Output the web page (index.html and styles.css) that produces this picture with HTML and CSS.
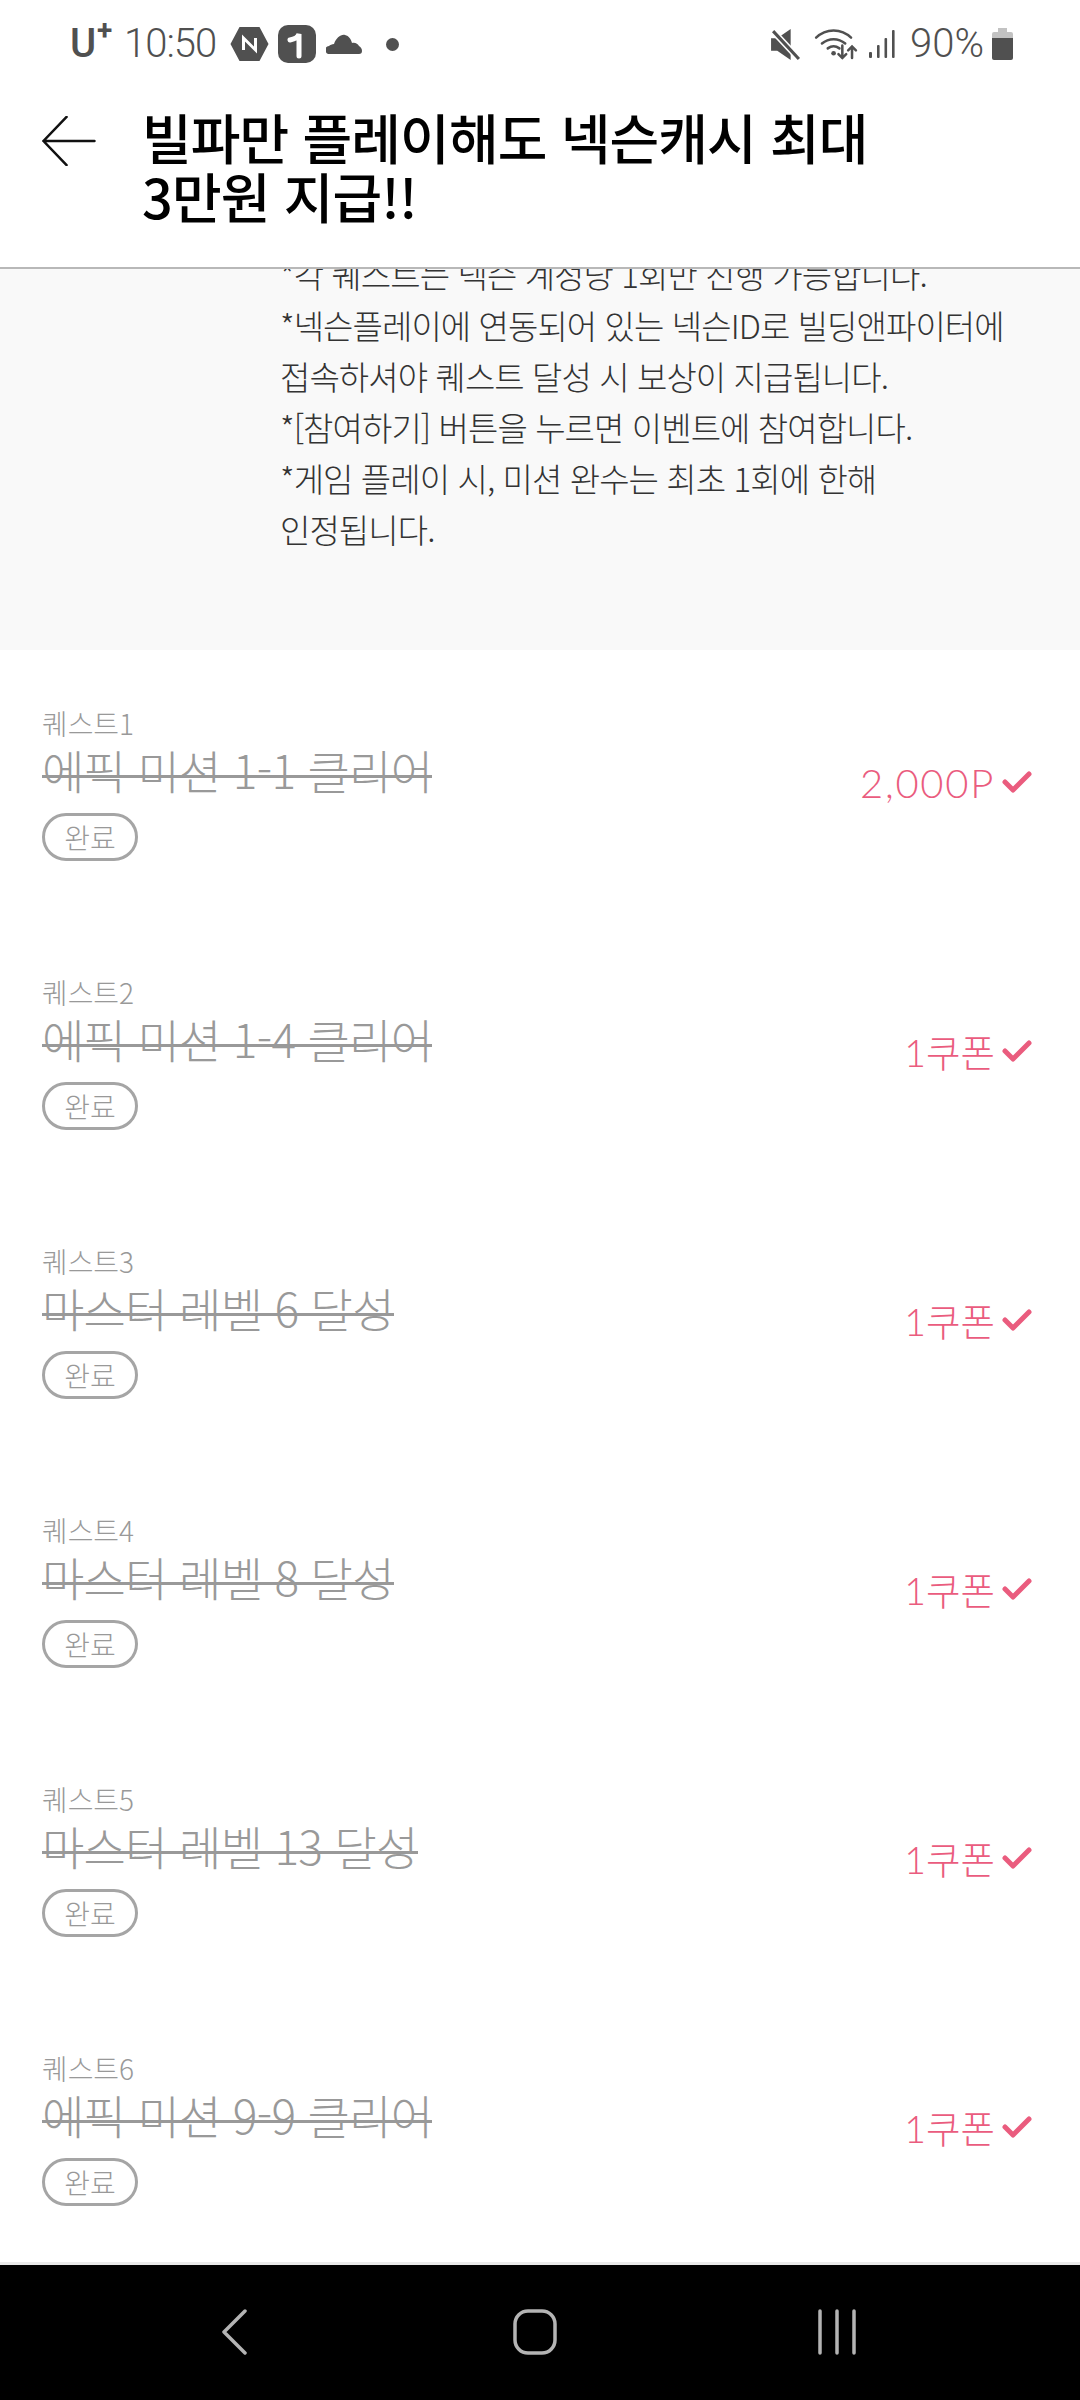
FILE: index.html
```html
<!DOCTYPE html>
<html lang="ko">
<head>
<meta charset="utf-8">
<title>빌파만 플레이해도 넥슨캐시 최대 3만원 지급!!</title>
<link rel="stylesheet" href="styles.css">
</head>
<body>
<div class="app">
  <div class="status">
    <div class="status-left">
      <span class="carrier">U<sup>+</sup></span>
      <span class="clock">10:50</span>
      <svg class="ic-n" viewBox="0 0 38 36"><path fill="#505050" d="M9 1h20l9 17-9 17H9L0 18z"/><path fill="none" stroke="#fff" stroke-width="3" d="M13 24V12l12 12V12"/></svg>
      <svg class="ic-one" viewBox="0 0 38 38"><rect width="38" height="38" rx="10" fill="#505050"/><path fill="none" stroke="#fff" stroke-width="5" stroke-linecap="round" d="M12 15c5-1 8-3 9-6v22"/></svg>
      <svg class="ic-cloud" viewBox="0 0 36 20"><path fill="#505050" d="M4 20a4 4 0 0 1-1-8c1-1 3-2 5-2 2-6 7-10 11-9 4 1 6 4 7 8 3-1 6 1 7 3 2 1 3 3 3 5 0 2-1 3-3 3z"/></svg>
      <span class="dot"></span>
    </div>
    <div class="status-right">
      <svg class="ic-mute" viewBox="0 0 30 32"><path fill="#505050" d="M1 10h6L20 1v30L7 22H1z"/><path stroke="#fff" stroke-width="6" d="M0 0l30 32"/><path stroke="#505050" stroke-width="3" d="M3 3l25 27"/></svg>
      <svg class="ic-wifi" viewBox="0 0 46 34"><g fill="none" stroke="#505050" stroke-width="2.6" stroke-linecap="round"><path d="M2 10C12 0 28 0 38 10"/><path d="M8 16c7-6 17-6 24 0"/><path d="M14 21c4-3 8-3 12 0"/><path d="M29 18v13m-4-4 4 4 4-4"/><path d="M39 31V19m-4 4 4-4 4 4"/></g><circle cx="20" cy="26" r="2.4" fill="#505050"/></svg>
      <svg class="ic-signal" viewBox="0 0 26 30"><g fill="#505050"><rect x="0" y="23" width="3" height="6" rx="1"/><rect x="8" y="16" width="2.6" height="13" rx="1"/><rect x="15.500" y="9" width="2.600" height="20" rx="1"/><rect x="23" y="1" width="2.600" height="28" rx="1"/></g></svg>
      <span class="battery-text">90%</span>
      <svg class="ic-batt" viewBox="0 0 21 32"><path fill="#c2c2c2" d="M6 0h9v4h4a2 2 0 0 1 2 2v4H0V6a2 2 0 0 1 2-2h4z"/><path fill="#505050" d="M0 10h21v20a2 2 0 0 1-2 2H2a2 2 0 0 1-2-2z"/></svg>
    </div>
  </div>

  <header class="topbar">
    <svg class="back" viewBox="0 0 56 52"><path fill="none" stroke="#111" stroke-width="2.600" stroke-linecap="round" d="M55 26H2M26 1 2 26l24 25"/></svg>
    <h1 class="title">빌파만 플레이해도 넥슨캐시 최대<br>3만원 지급!!</h1>
  </header>

  <main class="content">
    <section class="notice">
      <p>*각 퀘스트는 넥슨 계정당 1회만 진행 가능합니다.</p>
      <p>*넥슨플레이에 연동되어 있는 넥슨ID로 빌딩앤파이터에<br>접속하셔야 퀘스트 달성 시 보상이 지급됩니다.</p>
      <p>*[참여하기] 버튼을 누르면 이벤트에 참여합니다.</p>
      <p>*게임 플레이 시, 미션 완수는 최초 1회에 한해<br>인정됩니다.</p>
    </section>

    <ul class="quests">
      <li class="quest">
        <div class="quest-info"><div class="q-label">퀘스트1</div><div class="q-title">에픽 미션 1-1 클리어</div><span class="q-badge">완료</span></div>
        <div class="q-reward"><span class="q-points">2,000P</span><svg class="check" viewBox="0 0 30 24"><path d="M3 12l8 8L27 4"/></svg></div>
      </li>
      <li class="quest">
        <div class="quest-info"><div class="q-label">퀘스트2</div><div class="q-title">에픽 미션 1-4 클리어</div><span class="q-badge">완료</span></div>
        <div class="q-reward">1쿠폰<svg class="check" viewBox="0 0 30 24"><path d="M3 12l8 8L27 4"/></svg></div>
      </li>
      <li class="quest">
        <div class="quest-info"><div class="q-label">퀘스트3</div><div class="q-title">마스터 레벨 6 달성</div><span class="q-badge">완료</span></div>
        <div class="q-reward">1쿠폰<svg class="check" viewBox="0 0 30 24"><path d="M3 12l8 8L27 4"/></svg></div>
      </li>
      <li class="quest">
        <div class="quest-info"><div class="q-label">퀘스트4</div><div class="q-title">마스터 레벨 8 달성</div><span class="q-badge">완료</span></div>
        <div class="q-reward">1쿠폰<svg class="check" viewBox="0 0 30 24"><path d="M3 12l8 8L27 4"/></svg></div>
      </li>
      <li class="quest">
        <div class="quest-info"><div class="q-label">퀘스트5</div><div class="q-title">마스터 레벨 13 달성</div><span class="q-badge">완료</span></div>
        <div class="q-reward">1쿠폰<svg class="check" viewBox="0 0 30 24"><path d="M3 12l8 8L27 4"/></svg></div>
      </li>
      <li class="quest">
        <div class="quest-info"><div class="q-label">퀘스트6</div><div class="q-title">에픽 미션 9-9 클리어</div><span class="q-badge">완료</span></div>
        <div class="q-reward">1쿠폰<svg class="check" viewBox="0 0 30 24"><path d="M3 12l8 8L27 4"/></svg></div>
      </li>
    </ul>
  </main>

  <nav class="navbar">
    <svg class="nav-back" viewBox="0 0 26 46"><path d="M24 2 3 23l21 21"/></svg>
    <svg class="nav-home" viewBox="0 0 44 46"><rect x="2" y="2" width="40" height="42" rx="13"/></svg>
    <svg class="nav-recent" viewBox="0 0 40 46"><path d="M3 2v42M20 2v42M37 2v42"/></svg>
  </nav>
</div>
</body>
</html>
```
FILE: styles.css
```css
* { box-sizing: border-box; }
html, body { margin: 0; padding: 0; background: #fff; }
body { font-family: "Noto Sans CJK KR", "Noto Sans", sans-serif; }
.app { width: 1080px; height: 2400px; display: flex; flex-direction: column; overflow: hidden; }

.status { height: 84px; flex: none; padding: 24px 67px 0 70px; display: flex; justify-content: space-between; align-items: flex-start; color: #505050; }
.status-left, .status-right { display: flex; align-items: center; height: 40px; }
.carrier { font-family: "Roboto", sans-serif; font-size: 40px; font-weight: 500; line-height: 40px; position: relative; width: 54px; }
.carrier sup { position: absolute; left: 27px; top: -7px; font-size: 28px; line-height: 28px; font-weight: 700; }
.clock { font-family: "Roboto", sans-serif; font-size: 40px; font-weight: 300; width: 95px; line-height: 40px; letter-spacing: -1px; }
.ic-n { width: 39px; height: 36px; margin-left: 11px; flex: none; }
.ic-one { width: 38px; height: 38px; margin-left: 9px; flex: none; }
.ic-cloud { width: 36px; height: 20px; margin-left: 10px; flex: none; }
.dot { width: 13px; height: 13px; border-radius: 50%; background: #505050; margin-left: 24px; }
.ic-mute { width: 33px; height: 33px; }
.ic-wifi { width: 45px; height: 33px; margin-left: 12px; }
.ic-signal { width: 26px; height: 30px; margin-left: 10px; }
.battery-text { font-family: "Roboto", sans-serif; font-size: 40px; font-weight: 300; line-height: 40px; margin-left: 15px; }
.ic-batt { width: 21px; height: 32px; margin-left: 8px; }

.topbar { height: 185px; flex: none; display: flex; align-items: flex-start; border-bottom: 2px solid #b8b8b8; padding: 32px 0 0 41px; background: #fff; position: relative; z-index: 1; }
.back { width: 55px; height: 50px; flex: none; }
.title { margin: -9px 0 0 46px; font-size: 54px; line-height: 59px; font-weight: 500; color: #000; letter-spacing: -.9px; }

.content { flex: 1; min-height: 0; overflow: hidden; }
.notice { height: 381px; margin: 0; background: #f9f9f9; padding: 0 0 0 280px; font-size: 33px; line-height: 51px; font-weight: 300; color: #333; letter-spacing: -.93px; overflow: hidden; }
.notice p { margin: 0; position: relative; top: -20px; }

.quests { list-style: none; margin: 0; padding: 0; }
.quest { height: 269px; padding: 55px 48px 0 42px; display: flex; justify-content: space-between; }
.q-label { font-size: 28px; line-height: 36px; color: #999; font-weight: 300; letter-spacing: -.1px; }
.q-title { position: relative; font-size: 46px; line-height: 50px; margin-top: 3px; color: #999; font-weight: 300; letter-spacing: -.7px; }
.q-title::after { content: ""; position: absolute; left: 0; right: 0; top: 31px; height: 3px; background: #999; }
.q-badge { display: flex; align-items: center; justify-content: center; width: 96px; height: 48px; margin-top: 19px; border: 3px solid #a5a5a5; border-radius: 24px; font-size: 28px; font-weight: 300; color: #999; }
.q-reward { display: flex; align-items: center; height: 50px; margin-top: 51px; font-family: "Lato", "Noto Sans CJK KR", sans-serif; font-size: 37.500px; font-weight: 300; color: #ea5c7e; }
.q-points { font-size: 40px; letter-spacing: 1.700px; position: relative; top: 2px; }
.check { width: 30px; height: 24px; margin: 2px 0 0 7px; fill: none; stroke: #ea5c7e; stroke-width: 5; stroke-linecap: round; stroke-linejoin: round; }

.navbar { height: 138px; flex: none; background: #000; border-top: 3px solid #eaeaea; position: relative; display: flex; }
.navbar svg { position: absolute; top: 44px; height: 46px; fill: none; stroke: #b4b4b4; stroke-width: 3.500; stroke-linecap: round; stroke-linejoin: round; }
.nav-back { left: 221px; width: 26px; }
.nav-home { left: 513px; width: 44px; }
.nav-recent { left: 817px; width: 40px; }
```
